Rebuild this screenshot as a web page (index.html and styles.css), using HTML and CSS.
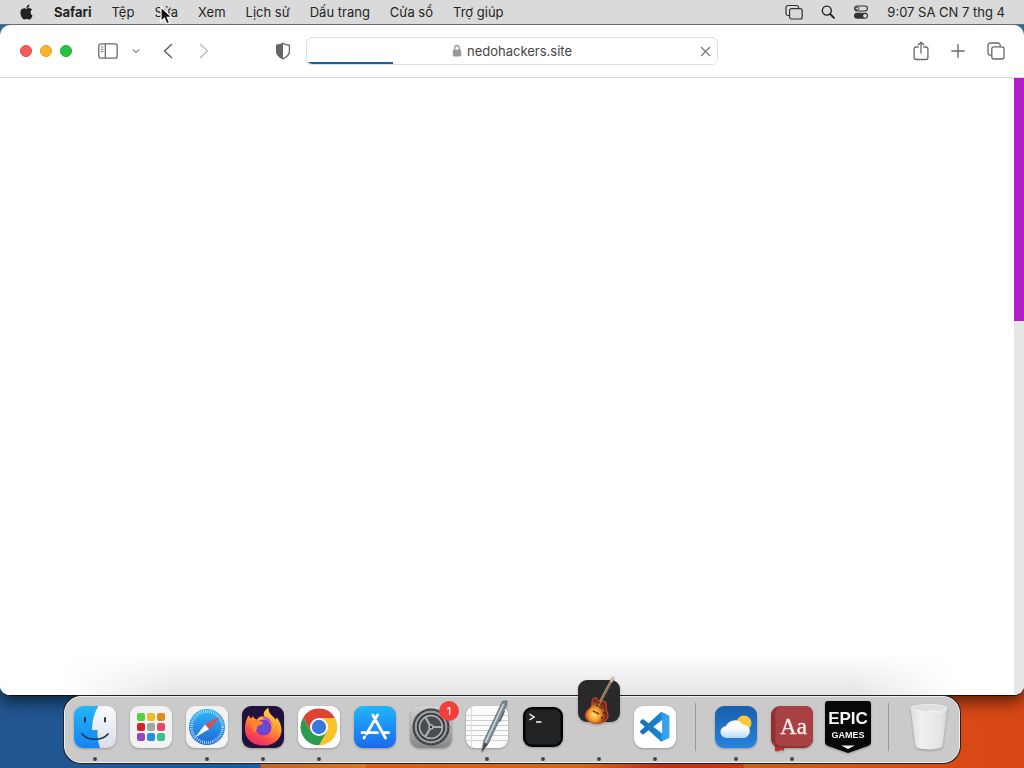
FILE: index.html
```html
<!DOCTYPE html>
<html lang="vi">
<head>
<meta charset="utf-8">
<meta name="viewport" content="width=device-width, initial-scale=1">
<title>Safari</title>
<link rel="stylesheet" href="styles.css">
</head>
<body>
<header class="menubar">
  <nav class="menus" aria-label="Menu">
    <button class="menu apple" aria-label="Apple"><svg width="15" height="16" viewBox="0 0 24 24" fill="#222"><path d="M12.152 6.896c-.948 0-2.415-1.078-3.96-1.04-2.04.027-3.91 1.183-4.961 3.014-2.117 3.675-.546 9.103 1.519 12.09 1.013 1.454 2.208 3.09 3.792 3.039 1.52-.065 2.09-.987 3.935-.987 1.831 0 2.35.987 3.96.948 1.637-.026 2.676-1.48 3.676-2.948 1.156-1.688 1.636-3.325 1.662-3.415-.039-.013-3.182-1.221-3.22-4.857-.026-3.04 2.48-4.494 2.597-4.559-1.429-2.09-3.623-2.324-4.39-2.376-2-.156-3.675 1.09-4.61 1.09zM15.53 3.83c.843-1.012 1.4-2.427 1.245-3.83-1.207.052-2.662.805-3.532 1.818-.78.896-1.454 2.338-1.273 3.714 1.338.104 2.715-.688 3.559-1.701"/></svg></button>
    <button class="menu app-name">Safari</button>
    <button class="menu">Tệp</button>
    <button class="menu">Sửa</button>
    <button class="menu">Xem</button>
    <button class="menu">Lịch sử</button>
    <button class="menu">Dấu trang</button>
    <button class="menu">Cửa sổ</button>
    <button class="menu">Trợ giúp</button>
  </nav>
  <div class="status">
    <button class="menu" aria-label="Stage"><svg width="18" height="16" viewBox="0 0 18 16" fill="none" stroke="#333" stroke-width="1.2"><path d="M4.500 11.500H3a2 2 0 0 1-2-2V3.500a2 2 0 0 1 2-2h8.500a2 2 0 0 1 2 2v1"/><rect x="4.600" y="4.600" width="12.600" height="10.400" rx="2"/></svg></button>
    <button class="menu" aria-label="Spotlight"><svg width="14" height="14" viewBox="0 0 14 14" fill="none" stroke="#222"><circle cx="5.800" cy="5.600" r="4.500" stroke-width="1.400"/><path d="M9.200 9l3.800 3.800" stroke-width="1.900" stroke-linecap="round"/></svg></button>
    <button class="menu" aria-label="Control Center"><svg width="16" height="16" viewBox="0 0 16 16"><rect x="1.600" y="2" width="12.800" height="5" rx="2.500" fill="none" stroke="#333" stroke-width="1.200"/><circle cx="4.300" cy="4.500" r="1.600" fill="none" stroke="#333"/><rect x="1" y="8.800" width="14" height="6" rx="3" fill="#333"/><circle cx="12" cy="11.800" r="1.900" fill="#ddd"/></svg></button>
    <button class="menu clock">9:07 SA CN 7 thg 4</button>
  </div>
  <svg class="cursor" width="14" height="20" viewBox="0 0 14 20"><path d="M1 1v14.500l3.400-3.200 2.300 5.400 2.800-1.200-2.300-5.200h4.700z" fill="#111" stroke="#fff" stroke-width="1.200"/></svg>
</header>

<main class="window">
  <div class="toolbar">
    <div class="tools-left">
      <div class="lights">
        <button class="light close" aria-label="Close"></button>
        <button class="light minimize" aria-label="Minimize"></button>
        <button class="light maximize" aria-label="Zoom"></button>
      </div>
      <div class="sidebar-tools">
        <button class="tool" aria-label="Sidebar"><svg width="20" height="16" viewBox="0 0 20 16" fill="none" stroke="#6c6c6a" stroke-width="1.300"><rect x=".8" y=".8" width="18.400" height="14.400" rx="2.200"/><path d="M7.300 1v14"/><path d="M2.800 4h2.500M2.800 6.300h2.500M2.800 8.600h2.500" stroke-width="1"/></svg></button>
        <button class="tool" aria-label="Tab groups"><svg width="8" height="5" viewBox="0 0 8 5" fill="none" stroke="#999" stroke-width="1.500" stroke-linecap="round"><path d="M1 1l3 2.400L7 1"/></svg></button>
      </div>
      <div class="history">
        <button class="tool" aria-label="Back"><svg width="10" height="16" viewBox="0 0 10 16" fill="none" stroke="#5f5f5d" stroke-width="1.500" stroke-linecap="round" stroke-linejoin="round"><path d="M8.500 1.500L1.500 8l7 6.500"/></svg></button>
        <button class="tool" aria-label="Forward"><svg width="10" height="16" viewBox="0 0 10 16" fill="none" stroke="#bdbdbb" stroke-width="1.500" stroke-linecap="round" stroke-linejoin="round"><path d="M1.500 1.500L8.500 8l-7 6.500"/></svg></button>
      </div>
      <button class="tool shield" aria-label="Privacy"><svg width="16" height="18" viewBox="0 0 16 18"><path d="M8 1.200C6 2.600 3.800 3 1.600 3.200V9.500c0 3.500 3.300 5.800 6.400 7.300 3.100-1.500 6.400-3.800 6.400-7.300V3.200C12.200 3 10 2.600 8 1.200z" fill="#fff" stroke="#666662" stroke-width="1.300"/><path d="M8 1.200C6 2.600 3.800 3 1.600 3.200V9.500c0 3.500 3.300 5.800 6.400 7.300z" fill="#666662"/></svg></button>
    </div>
    <div class="address">
      <label class="url"><svg width="10" height="14" viewBox="0 0 10 14"><rect x=".8" y="5.500" width="8.400" height="7" rx="1.300" fill="#999"/><path d="M2.800 6V3.800a2.200 2.300 0 0 1 4.400 0V6" fill="none" stroke="#999" stroke-width="1.300"/></svg><input class="url-input" type="text" value="nedohackers.site" aria-label="URL"></label>
      <button class="tool" aria-label="Stop"><svg width="11" height="11" viewBox="0 0 11 11" stroke="#757575" stroke-width="1.200"><path d="M1 1l9 9M10 1l-9 9"/></svg></button>
      <span class="progress"></span>
    </div>
    <div class="tools-right">
      <button class="tool" aria-label="Share"><svg width="16" height="20" viewBox="0 0 16 20" fill="none" stroke="#696969" stroke-width="1.300" stroke-linecap="round" stroke-linejoin="round"><path d="M5.200 6H3a1.900 1.900 0 0 0-1.900 1.900v8.700A1.900 1.900 0 0 0 3 18.500h10a1.900 1.900 0 0 0 1.900-1.900V7.900A1.900 1.900 0 0 0 13 6h-2.200M8 12V1.200M5.300 3.800L8 1.200l2.700 2.600"/></svg></button>
      <button class="tool" aria-label="New tab"><svg width="14" height="14" viewBox="0 0 14 14" stroke="#696969" stroke-width="1.400" stroke-linecap="round"><path d="M7 .8v12.400M.8 7h12.400"/></svg></button>
      <button class="tool" aria-label="Tabs"><svg width="18" height="18" viewBox="0 0 18 18" fill="none" stroke="#696969" stroke-width="1.300"><path d="M4.800 13.200H3.200a2.200 2.200 0 0 1-2.200-2.200V3.200A2.200 2.200 0 0 1 3.200 1h7.800a2.200 2.200 0 0 1 2.200 2.200v1.600"/><rect x="4.800" y="4.800" width="12.200" height="12.200" rx="2.200"/></svg></button>
    </div>
  </div>
  <div class="page">
    <div class="content"></div>
    <div class="rail"><div class="thumb"></div></div>
  </div>
</main>

<footer class="desktop">
  <nav class="dock" aria-label="Dock">
    <a class="item running" href="#" aria-label="Finder"><svg class="icon" viewBox="0 0 42 42"><defs><linearGradient id="fb" x2="0" y2="1"><stop stop-color="#25b5f8"/><stop offset="1" stop-color="#1583f4"/></linearGradient><linearGradient id="fw" x2="0" y2="1"><stop stop-color="#fafbfd"/><stop offset="1" stop-color="#d9dee8"/></linearGradient></defs><rect width="42" height="42" rx="9" fill="url(#fw)"/><path d="M9 0h15.500C20 7 18.300 15 18 24h5.500c-.2 6 .4 12 2.500 18H9a9 9 0 0 1-9-9V9a9 9 0 0 1 9-9z" fill="url(#fb)"/><path d="M11 12v3.500M31 12v3.500" stroke="#223" stroke-width="1.800" stroke-linecap="round"/><path d="M8 28c6 7 20 7 26 0" fill="none" stroke="#18375a" stroke-width="1.700" stroke-linecap="round"/></svg></a>
    <a class="item" href="#" aria-label="Launchpad"><svg class="icon" viewBox="0 0 42 42"><rect width="42" height="42" rx="9" fill="#f2f2f3"/><rect x="7" y="7" width="8" height="8" rx="2" fill="#57cf45"/><rect x="17" y="7" width="8" height="8" rx="2" fill="#f4b92b"/><rect x="27" y="7" width="8" height="8" rx="2" fill="#e28a1c"/><rect x="7" y="17" width="8" height="8" rx="2" fill="#cf2622"/><rect x="17" y="17" width="8" height="8" rx="2" fill="#9da7a2"/><rect x="27" y="17" width="8" height="8" rx="2" fill="#e94665"/><rect x="7" y="27" width="8" height="8" rx="2" fill="#9346c4"/><rect x="17" y="27" width="8" height="8" rx="2" fill="#248ee7"/><rect x="27" y="27" width="8" height="8" rx="2" fill="#38c18f"/></svg></a>
    <a class="item running" href="#" aria-label="Safari"><svg class="icon" viewBox="0 0 42 42"><defs><linearGradient id="sa" x2="0" y2="1"><stop stop-color="#31b6f4"/><stop offset="1" stop-color="#1d68d7"/></linearGradient></defs><rect width="42" height="42" rx="9" fill="#f2f2f2"/><circle cx="21" cy="21" r="18" fill="url(#sa)"/><circle cx="21" cy="21" r="15.600" fill="none" stroke="#d8efff" stroke-width="3" stroke-dasharray=".7 1.342"/><path d="M34.500 10.500L19 18.500l4 4.700z" fill="#e8493d"/><path d="M9 31.500l10-13 4 4.700z" fill="#f8fafc"/></svg></a>
    <a class="item running" href="#" aria-label="Firefox"><svg class="icon" viewBox="0 0 42 42"><defs><linearGradient id="ff" x1=".8" y1="0" x2=".3" y2="1"><stop stop-color="#ffe34a"/><stop offset=".45" stop-color="#ff9a2b"/><stop offset=".75" stop-color="#ff4b4b"/><stop offset="1" stop-color="#e52a72"/></linearGradient><radialGradient id="fp"><stop stop-color="#4f5ae0"/><stop offset="1" stop-color="#8a35c2"/></radialGradient></defs><rect width="42" height="42" rx="9" fill="#20123c"/><path d="M7 9c.4 2 1.300 3 2 3.500L11 10c.3 2 2 3 4 3.400 3-4 6.500-3.400 7.700-2C20 7 23 4 26.500 1.500c-.3 5 2.500 7 5 9.500 1 1 1.500 1.700 2 2.800l1.500-2.300c3.500 5 5.700 11 4 16.500-2 7-9 11.600-17.500 11.600C10 39.500 2.500 32 3 22.500 3 17 4.500 12 7 9z" fill="url(#ff)"/><circle cx="21.500" cy="21.500" r="8" fill="url(#fp)"/><path d="M9 14c4-1.500 7 .5 10.500 1.500 2.500.7 1.500 3-1 3.500-3 .6-4 2-3.500 3.500-1 3-2 4-3 3.500-2-3.500-3.500-8-3-12z" fill="#ff852d"/><path d="M20 11c5-1 10 3 10.500 8.500C30 17 28 15 25 14.500z" fill="#b04de8"/></svg></a>
    <a class="item running" href="#" aria-label="Chrome"><svg class="icon" viewBox="0 0 42 42"><rect width="42" height="42" rx="9" fill="#fff"/><path d="M21 12h15.900A18.300 18.300 0 0 1 21 39.300z" fill="#fbc229"/><path d="M5.100 11.800L13.100 25.600 21 21l7.800 4.500L21 39.300A18.300 18.300 0 0 1 5.100 11.800z" fill="#2d9b50"/><path d="M5.100 11.800A18.300 18.300 0 0 1 36.900 11.900H21v9l-7.900 4.700z" fill="#dc4437"/><circle cx="21" cy="21" r="9" fill="#fff"/><circle cx="21" cy="21" r="7.200" fill="#3979df"/></svg></a>
    <a class="item" href="#" aria-label="App Store"><svg class="icon" viewBox="0 0 42 42"><defs><linearGradient id="as" x2="0" y2="1"><stop stop-color="#20b6fb"/><stop offset="1" stop-color="#1b69ed"/></linearGradient></defs><rect width="42" height="42" rx="9" fill="url(#as)"/><g stroke="#fff" stroke-width="2.800" stroke-linecap="round"><path d="M18.800 9l12.700 23M23.500 9L12.500 28M8 26.700h15.500M30 26.700h4.500M10.600 31l-.6 1"/></g></svg></a>
    <a class="item" href="#" aria-label="System Preferences"><svg class="icon" viewBox="0 0 42 42"><defs><linearGradient id="sp" x2="0" y2="1"><stop stop-color="#d1d3d5"/><stop offset="1" stop-color="#858689"/></linearGradient></defs><rect width="42" height="42" rx="9" fill="url(#sp)"/><circle cx="21" cy="21" r="18.500" fill="#2c2e30"/><circle cx="21" cy="21" r="17.200" fill="none" stroke="#888" stroke-width="1" stroke-dasharray="1 1.160"/><circle cx="21" cy="21" r="15.200" fill="none" stroke="#999c9e" stroke-width="2.400"/><circle cx="21" cy="21" r="11.500" fill="#4a4d4f" stroke="#a9acae" stroke-width="1.800"/><path d="M21 21h11M21 21l-5.500-9.500M21 21l-5.500 9.500" stroke="#b0b3b5" stroke-width="2.200"/><circle cx="21" cy="21" r="2" fill="#303234" stroke="#b0b3b5" stroke-width="1.500"/></svg><span class="badge">1</span></a>
    <a class="item running" href="#" aria-label="TextEdit"><svg class="icon" viewBox="0 0 42 42"><rect width="42" height="42" rx="9" fill="#fbfbfb"/><path d="M0 9.500h42M0 14.500h42M0 19.500h42M0 24.500h42M0 29.500h42M0 34.500h42" stroke="#cfcfcf"/><path d="M5.500 0v42" stroke="#ddd"/><path d="M35.500-2.500l1.500-2.500h4l-.5 4L22.500 37l-6.500 8.500 1.500-10z" fill="#7c8d95" stroke="#58666d" stroke-width=".8"/><path d="M37.500-2L19.500 36.500" stroke="#c4d7df" stroke-width="1.700"/><path d="M18 37l4 1-6 7.500z" fill="#454b4f"/><path d="M38.500 5l-5 11" stroke="#4f5b62" stroke-width="1.300"/></svg></a>
    <a class="item running" href="#" aria-label="Terminal"><svg class="icon" viewBox="0 0 42 42"><rect x="1" y="1" width="40" height="40" rx="9" fill="#050505"/><rect x="3.500" y="3.500" width="35" height="35" rx="6" fill="#202224"/><path d="M7.500 8l4.500 3-4.500 3M14 16h5.500" fill="none" stroke="#f4f4f4" stroke-width="1.500"/></svg></a>
    <a class="item running" href="#" aria-label="GarageBand"><svg class="icon bounce" viewBox="0 0 42 42"><defs><radialGradient id="gb" cx=".4" cy=".65"><stop stop-color="#ffe071"/><stop offset=".5" stop-color="#f49a27"/><stop offset="1" stop-color="#7d2a1c"/></radialGradient></defs><rect width="42" height="42" rx="9" fill="#29292b"/><path d="M22 22L34.500-1.500" stroke="#a99885" stroke-width="2.600"/><path d="M22.500 22L34.500 0" stroke="#553528" stroke-width="1.200"/><path d="M32 1l2-4 2-1v3l-2 4z" fill="#d1bea7"/><path d="M15 19c2-2.500 4-1 5 1.500 1.500 2 3 1 5 .5 3-.5 4 3 3 6-.5 3 2.500 5 2 9-.5 5-6 8-12 7.500-6.500-.5-11-4-10.500-9.500.5-4 5-5 6-8 .7-2 0-5 1.500-7z" fill="url(#gb)" stroke="#c24a34" stroke-width="1.100"/><path d="M18 25l6 3M15 31l6 3" stroke="#653620" stroke-width="1.400"/><circle cx="26" cy="33" r="1" fill="#392018"/><circle cx="24" cy="38" r="1" fill="#392018"/><path d="M15 37l20-38" stroke="#e5c38b" stroke-width=".5"/></svg></a>
    <a class="item running" href="#" aria-label="Visual Studio Code"><svg class="icon" viewBox="0 0 42 42"><defs><linearGradient id="vs"><stop stop-color="#1b6fb5"/><stop offset=".7" stop-color="#1e84d0"/><stop offset=".75" stop-color="#2f9ee8"/><stop offset="1" stop-color="#3aa6ee"/></linearGradient></defs><rect width="42" height="42" rx="9" fill="#fff"/><path transform="translate(6 6) scale(1.23)" d="M23.150 2.587L18.210.210a1.494 1.494 0 0 0-1.705.290l-9.460 8.630-4.120-3.128a.999.999 0 0 0-1.276.057L.327 7.261A1 1 0 0 0 .326 8.740L3.899 12 .326 15.260a1 1 0 0 0 .001 1.479L1.650 17.940a.999.999 0 0 0 1.276.057l4.120-3.128 9.460 8.630a1.492 1.492 0 0 0 1.704.290l4.942-2.377A1.500 1.500 0 0 0 24 20.060V3.939a1.500 1.500 0 0 0-.850-1.352zm-5.146 14.861L10.826 12l7.178-5.448v10.896z" fill="url(#vs)"/></svg></a>
    <span class="divider"></span>
    <a class="item running" href="#" aria-label="Weather"><svg class="icon" viewBox="0 0 42 42"><defs><linearGradient id="we" x2="0" y2="1"><stop stop-color="#195fae"/><stop offset="1" stop-color="#2684dc"/></linearGradient><linearGradient id="cl" x2="0" y2="1"><stop offset=".4" stop-color="#fff"/><stop offset="1" stop-color="#b5dbf8"/></linearGradient></defs><rect width="42" height="42" rx="9" fill="url(#we)"/><circle cx="29" cy="17" r="7.500" fill="#f8ca39"/><path d="M12 32a6 6 0 0 1-1-12 9.500 9.500 0 0 1 16.500-1.500A6.800 6.800 0 1 1 27 32z" fill="url(#cl)"/></svg></a>
    <a class="item running" href="#" aria-label="Dictionary"><svg class="icon" viewBox="0 0 42 42"><path d="M4 40h9v5l-2.500-1.500L8 45H4z" fill="#b72e31"/><rect width="42" height="42" rx="9" fill="#8f3033"/><rect x="4" width="38" height="40" rx="7" fill="#a94144"/><path d="M4 5v32" stroke="#943236"/><text x="22.500" y="28" text-anchor="middle" class="dictionary-text">Aa</text></svg></a>
    <a class="item" href="#" aria-label="Epic Games"><svg class="icon" viewBox="0 0 42 42"><path d="M1-5h40a3 3 0 0 1 3 3v38c0 2-1 3-3 4L21 47 1 40c-2-1-3-2-3-4V-2a3 3 0 0 1 3-3z" fill="#080808"/><text x="21" y="18" text-anchor="middle" class="epic-text">EPIC</text><text x="21" y="32" text-anchor="middle" class="games-text">GAMES</text><path d="M14 39.500h14L21 43z" fill="#eee"/></svg></a>
    <span class="divider"></span>
    <a class="item" href="#" aria-label="Trash"><svg class="icon" viewBox="0 0 42 42"><defs><linearGradient id="tr"><stop stop-color="#dcdddd"/><stop offset=".3" stop-color="#f0f1f1"/><stop offset=".8" stop-color="#e3e4e4"/><stop offset="1" stop-color="#d4d5d5"/></linearGradient></defs><path d="M2.500 1l5 39c.5 4.500 26 4.500 27 0l5-39z" fill="url(#tr)"/><ellipse cx="21" cy="2" rx="18.300" ry="3.500" fill="#dddede" stroke="#eee"/><path d="M7 4l10 3 8-3 8 3 4-3" fill="none" stroke="#f3f3f3"/></svg></a>
  </nav>
</footer>
</body>
</html>
```
FILE: styles.css
```css
* { box-sizing: border-box; }

body {
  margin: 0;
  min-height: 100vh;
  display: flex;
  flex-direction: column;
  background:
    linear-gradient(#2878ae, #2878ae) top / 100% 60px no-repeat,
    linear-gradient(90deg, #21558f 0, #1d5c9d 260px, #b9652c 261px, #d5772c 365px, #d65c1b 366px, #d36721 580px, #b9301b 660px, #c93914 743px, #c46223 744px, #d84915 960px, #d74815 100%);
  font-family: Inter, "Noto Sans", sans-serif;
  font-size: 13px;
  line-height: 16px;
  color: #242424;
  overflow: hidden;
}

button {
  display: flex;
  align-items: center;
  padding: 0;
  border: 0;
  background: none;
  font: inherit;
  color: inherit;
}

svg { display: block; flex: none; }

.menubar {
  position: relative;
  display: flex;
  justify-content: space-between;
  height: 25px;
  padding: 0 19px 1px;
  background: #dadada;
  border-bottom: 1px solid #686c72;
}

.menus { display: flex; gap: 20px; }
.menu { white-space: nowrap; }
.app-name { font-weight: 700; }
.status { display: flex; gap: 18px; }

.cursor {
  position: absolute;
  left: 160px;
  top: 6px;
}

.window {
  flex: 1;
  display: flex;
  flex-direction: column;
  overflow: hidden;
  border-radius: 10px;
  background: #fff;
  border-bottom: 1px solid #111;
  box-shadow: 0 6px 16px rgba(0, 0, 0, .6);
}

.toolbar {
  display: grid;
  grid-template-columns: 1fr minmax(200px, 412px) 1fr;
  align-items: center;
  height: 53px;
  padding: 0 19px;
  border-bottom: 1px solid #d9d9d9;
}

.tools-left { display: flex; align-items: center; padding: 0 15px 0 1px; }
.lights { display: flex; gap: 8px; }
.light { width: 12px; height: 12px; border-radius: 50%; }
.close { background: #fb5b57; border: 1px solid #df4844; }
.minimize { background: #f8b52d; border: 1px solid #dda020; }
.maximize { background: #28c440; border: 1px solid #1ba630; }
.sidebar-tools { display: flex; align-items: center; gap: 14px; margin-left: 26px; }
.history { display: flex; gap: 26px; margin-left: 23px; }
.shield { margin-left: auto; }

.address {
  position: relative;
  display: flex;
  align-items: center;
  height: 28px;
  padding: 0 6px;
  overflow: hidden;
  border: 1px solid #dedede;
  border-radius: 6px;
}

.url {
  flex: 1;
  display: flex;
  align-items: center;
  justify-content: center;
  gap: 5px;
  padding-left: 12px;
}

.url-input {
  width: 106px;
  padding: 0;
  border: 0;
  outline: 0;
  background: none;
  font: inherit;
  color: #464646;
}

.progress {
  position: absolute;
  left: 0;
  bottom: 0;
  width: 86px;
  height: 2px;
  background: #1c629f;
}

.tools-right { display: flex; align-items: center; justify-content: flex-end; gap: 22px; }

.page { flex: 1; display: flex; }
.content {
  flex: 1;
  background:
    linear-gradient(90deg, #fff 60px, transparent 180px, transparent 850px, #fff 960px),
    linear-gradient(transparent calc(100% - 42px), #e4e4e5);
}
.rail { width: 10px; background: #e6e6e7; }
.thumb { height: 243px; background: #b41bc9; }

.desktop {
  display: flex;
  justify-content: center;
  padding: 0 12px 5px;
}

.dock {
  position: relative;
  display: flex;
  align-items: center;
  gap: 14px;
  height: 67px;
  padding: 0 9px 6px;
  background: #cacaca;
  border: 1px solid #eee;
  border-radius: 17px;
  box-shadow: 0 0 0 1px #222;
}

.item {
  position: relative;
  width: 42px;
  height: 42px;
  text-decoration: none;
}

.icon {
  width: 42px;
  height: 42px;
  overflow: visible;
  filter: drop-shadow(0 1px 1px rgba(0, 0, 0, .25));
}

.bounce { transform: translateY(-26px); }

.running::after {
  content: "";
  position: absolute;
  left: 19px;
  bottom: -13px;
  width: 4px;
  height: 4px;
  border-radius: 50%;
  background: #444;
}

.badge {
  position: absolute;
  right: -7px;
  top: -5px;
  width: 20px;
  height: 20px;
  border-radius: 50%;
  background: #f33f3c;
  color: #fff;
  font-size: 11px;
  line-height: 20px;
  text-align: center;
}

.divider { width: 1px; height: 48px; margin: 0 5px; background: #999; }

.dictionary-text { font: 23px "Liberation Serif", serif; fill: #fbe9e5; stroke: #fbe9e5; stroke-width: .4px; }
.epic-text { font: 700 17px "Liberation Sans Narrow", "Liberation Sans", sans-serif; fill: #f4f4f4; }
.games-text { font: 700 9px "Liberation Sans", sans-serif; fill: #f4f4f4; }
```
